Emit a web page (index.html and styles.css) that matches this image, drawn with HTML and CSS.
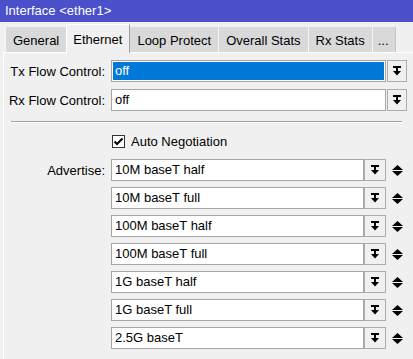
FILE: index.html
```html
<!DOCTYPE html>
<html>
<head>
<meta charset="utf-8">
<link rel="stylesheet" href="styles.css">
</head>
<body>
<div class="title">Interface &lt;ether1&gt;</div>
<div class="tabs">
  <div class="tab">General</div>
  <div class="tab active">Ethernet</div>
  <div class="tab">Loop Protect</div>
  <div class="tab">Overall Stats</div>
  <div class="tab">Rx Stats</div>
  <div class="tab more">...</div>
</div>
<div class="panel">
  <div class="row flow">
    <span class="lbl">Tx Flow Control:</span>
    <div class="field sel">off</div>
    <div class="btn"><svg width="8" height="10" viewBox="0 0 8 10"><rect x="0" y="0" width="8" height="2" fill="#000"/><rect x="3" y="2" width="2" height="3" fill="#000"/><polygon points="0,5 8,5 4,9.5" fill="#000"/></svg></div>
  </div>
  <div class="row flow">
    <span class="lbl">Rx Flow Control:</span>
    <div class="field">off</div>
    <div class="btn"><svg width="8" height="10" viewBox="0 0 8 10"><rect x="0" y="0" width="8" height="2" fill="#000"/><rect x="3" y="2" width="2" height="3" fill="#000"/><polygon points="0,5 8,5 4,9.5" fill="#000"/></svg></div>
  </div>
  <div class="sep"></div>
  <div class="check-row">
    <span class="lbl"></span>
    <span class="cb"><svg width="11" height="11" viewBox="0 0 11 11"><polyline points="1.5,5.5 4,8 9.5,2.5" fill="none" stroke="#000" stroke-width="2"/></svg></span>
    <span class="cb-text">Auto Negotiation</span>
  </div>
  <div class="adv-list">
    <div class="row adv"><span class="lbl">Advertise:</span><div class="field">10M baseT half</div><div class="btn"><svg width="8" height="10" viewBox="0 0 8 10"><rect x="0" y="0" width="8" height="2" fill="#000"/><rect x="3" y="2" width="2" height="3" fill="#000"/><polygon points="0,5 8,5 4,9.5" fill="#000"/></svg></div><svg class="spin" width="11" height="11" viewBox="0 0 11 11"><polygon points="5.5,0 11,5 0,5" fill="#000"/><polygon points="0,6 11,6 5.5,11" fill="#000"/></svg></div>
    <div class="row adv"><span class="lbl"></span><div class="field">10M baseT full</div><div class="btn"><svg width="8" height="10" viewBox="0 0 8 10"><rect x="0" y="0" width="8" height="2" fill="#000"/><rect x="3" y="2" width="2" height="3" fill="#000"/><polygon points="0,5 8,5 4,9.5" fill="#000"/></svg></div><svg class="spin" width="11" height="11" viewBox="0 0 11 11"><polygon points="5.5,0 11,5 0,5" fill="#000"/><polygon points="0,6 11,6 5.5,11" fill="#000"/></svg></div>
    <div class="row adv"><span class="lbl"></span><div class="field">100M baseT half</div><div class="btn"><svg width="8" height="10" viewBox="0 0 8 10"><rect x="0" y="0" width="8" height="2" fill="#000"/><rect x="3" y="2" width="2" height="3" fill="#000"/><polygon points="0,5 8,5 4,9.5" fill="#000"/></svg></div><svg class="spin" width="11" height="11" viewBox="0 0 11 11"><polygon points="5.5,0 11,5 0,5" fill="#000"/><polygon points="0,6 11,6 5.5,11" fill="#000"/></svg></div>
    <div class="row adv"><span class="lbl"></span><div class="field">100M baseT full</div><div class="btn"><svg width="8" height="10" viewBox="0 0 8 10"><rect x="0" y="0" width="8" height="2" fill="#000"/><rect x="3" y="2" width="2" height="3" fill="#000"/><polygon points="0,5 8,5 4,9.5" fill="#000"/></svg></div><svg class="spin" width="11" height="11" viewBox="0 0 11 11"><polygon points="5.5,0 11,5 0,5" fill="#000"/><polygon points="0,6 11,6 5.5,11" fill="#000"/></svg></div>
    <div class="row adv"><span class="lbl"></span><div class="field">1G baseT half</div><div class="btn"><svg width="8" height="10" viewBox="0 0 8 10"><rect x="0" y="0" width="8" height="2" fill="#000"/><rect x="3" y="2" width="2" height="3" fill="#000"/><polygon points="0,5 8,5 4,9.5" fill="#000"/></svg></div><svg class="spin" width="11" height="11" viewBox="0 0 11 11"><polygon points="5.5,0 11,5 0,5" fill="#000"/><polygon points="0,6 11,6 5.5,11" fill="#000"/></svg></div>
    <div class="row adv"><span class="lbl"></span><div class="field">1G baseT full</div><div class="btn"><svg width="8" height="10" viewBox="0 0 8 10"><rect x="0" y="0" width="8" height="2" fill="#000"/><rect x="3" y="2" width="2" height="3" fill="#000"/><polygon points="0,5 8,5 4,9.5" fill="#000"/></svg></div><svg class="spin" width="11" height="11" viewBox="0 0 11 11"><polygon points="5.5,0 11,5 0,5" fill="#000"/><polygon points="0,6 11,6 5.5,11" fill="#000"/></svg></div>
    <div class="row adv"><span class="lbl"></span><div class="field">2.5G baseT</div><div class="btn"><svg width="8" height="10" viewBox="0 0 8 10"><rect x="0" y="0" width="8" height="2" fill="#000"/><rect x="3" y="2" width="2" height="3" fill="#000"/><polygon points="0,5 8,5 4,9.5" fill="#000"/></svg></div><svg class="spin" width="11" height="11" viewBox="0 0 11 11"><polygon points="5.5,0 11,5 0,5" fill="#000"/><polygon points="0,6 11,6 5.5,11" fill="#000"/></svg></div>
  </div>
</div>
</body>
</html>
```
FILE: styles.css
```css
html, body {
  margin: 0;
  padding: 0;
  background: #f0f0f0;
  font-family: "Liberation Sans", Arial, sans-serif;
  font-size: 13px;
  color: #000;
  overflow: hidden;
}
.title {
  height: 22px;
  background: #4b4fc9;
  color: #fff;
  padding-left: 5px;
  line-height: 22px;
  box-sizing: border-box;
}
.tabs {
  height: 30px;
  display: flex;
  align-items: flex-end;
  padding-left: 5px;
}
.tab {
  height: 25px;
  box-sizing: border-box;
  padding: 2px 7px 0 7px;
  display: flex;
  align-items: center;
  background: #d9d9d9;
  border-left: 1px solid #f6f6f6;
}
.tab.more {
  padding: 2px 6px 0 5px;
  border-right: 1px solid #c6c6c6;
}
.tab.active {
  height: 29px;
  margin-bottom: -1px;
  position: relative;
  z-index: 1;
  background: #f0f0f0;
  border-left: 1px solid #fff;
  border-top: 1px solid #fff;
  border-right: 1px solid #a0a0a0;
  padding: 0 7px 0 6px;
}
.tab.active + .tab {
  border-left: none;
}
.panel {
  margin-left: 3px;
  border-left: 1px solid #fff;
  border-top: 1px solid #fff;
  padding-top: 7px;
  height: 299px;
}
.row {
  display: flex;
  align-items: center;
  height: 22px;
}
.flow {
  margin-bottom: 7px;
}
.lbl {
  width: 101px;
  margin-right: 6px;
  text-align: right;
  flex: none;
}
.field {
  height: 22px;
  box-sizing: border-box;
  border: 1px solid #a5a5a5;
  background: #fff;
  padding-left: 3px;
  line-height: 20px;
  flex: none;
}
.flow .field {
  width: 275px;
  margin-right: 1px;
}
.field.sel {
  background: #0078d7;
  color: #fff;
  box-shadow: inset 0 0 0 1px #fff;
}
.btn {
  height: 22px;
  box-sizing: border-box;
  border: 1px solid #adadad;
  background: #f0f0f0;
  display: flex;
  align-items: center;
  justify-content: center;
  flex: none;
}
.flow .btn {
  width: 20px;
}
.sep {
  margin: 10px 11px 0 7px;
  border-top: 1px solid #a0a0a0;
  border-bottom: 1px solid #fff;
}
.check-row {
  display: flex;
  align-items: center;
  height: 13px;
  margin-top: 12px;
}
.cb {
  width: 13px;
  height: 13px;
  box-sizing: border-box;
  border: 1px solid #333;
  background: #fff;
  margin-left: 1px;
  display: flex;
  align-items: center;
  justify-content: center;
  flex: none;
}
.cb-text {
  margin-left: 6px;
}
.adv-list {
  margin-top: 11px;
  display: flex;
  flex-direction: column;
  gap: 6px;
}
.adv .field {
  width: 253px;
}
.adv .btn {
  width: 22px;
}
.spin {
  margin-left: 6px;
  flex: none;
}
```
